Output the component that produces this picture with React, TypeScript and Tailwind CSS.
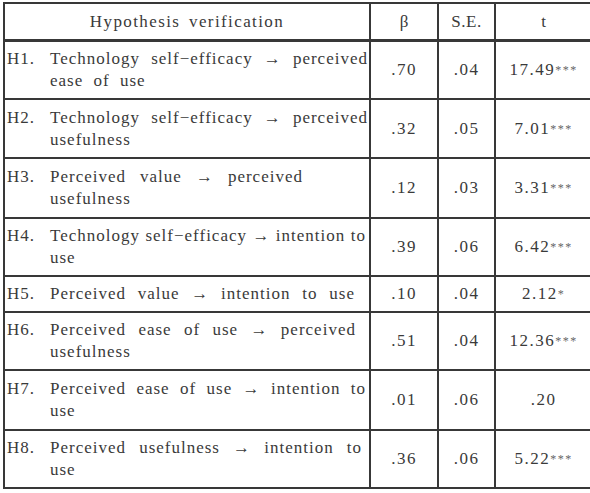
import React from "react";

type Row = { n: string; l1: string; l2?: string; pr: string; b: string; se: string; t: string; stars: string; height: string };

const rows: Row[] = [
  { n: "H1.", l1: "Technology self−efficacy → perceived", l2: "ease of use", pr: "pr-0", b: ".70", se: ".04", t: "17.49", stars: "***", height: "h-[59px]" },
  { n: "H2.", l1: "Technology self−efficacy → perceived", l2: "usefulness", pr: "pr-0", b: ".32", se: ".05", t: "7.01", stars: "***", height: "h-[59px]" },
  { n: "H3.", l1: "Perceived value → perceived", l2: "usefulness", pr: "pr-[65px]", b: ".12", se: ".03", t: "3.31", stars: "***", height: "h-[60px]" },
  { n: "H4.", l1: "Technology self−efficacy → intention to", l2: "use", pr: "pr-[2px]", b: ".39", se: ".06", t: "6.42", stars: "***", height: "h-[58px]" },
  { n: "H5.", l1: "Perceived value → intention to use", pr: "pr-[13px]", b: ".10", se: ".04", t: "2.12", stars: "*", height: "h-[36px]" },
  { n: "H6.", l1: "Perceived ease of use → perceived", l2: "usefulness", pr: "pr-[12px]", b: ".51", se: ".04", t: "12.36", stars: "***", height: "h-[58px]" },
  { n: "H7.", l1: "Perceived ease of use → intention to", l2: "use", pr: "pr-[2px]", b: ".01", se: ".06", t: ".20", stars: "", height: "h-[60px]" },
  { n: "H8.", l1: "Perceived usefulness → intention to", l2: "use", pr: "pr-[6px]", b: ".36", se: ".06", t: "5.22", stars: "***", height: "h-[58px]" },
];

const cell = "border-2 border-[#383838] font-['Liberation_Serif',serif] text-[17px] text-[#3a3a3a]";

export default function App() {
  return (
    <div className="w-[590px] h-[493px] overflow-hidden bg-white pt-[2px] pl-[3px] font-['Liberation_Serif',serif]">
      <table className="border-collapse w-[600px] table-fixed text-[#3a3a3a] text-[17px] font-['Liberation_Serif',serif]">
        <colgroup>
          <col className="w-[366px]" />
          <col className="w-[68px]" />
          <col className="w-[57px]" />
          <col className="w-[109px]" />
        </colgroup>
        <thead>
          <tr className="h-[37px]">
            <th className={`${cell} border-b-[3px] font-normal text-center tracking-[1.4px] [word-spacing:3px]`}>Hypothesis verification</th>
            <th className={`${cell} border-b-[3px] font-normal text-center`}>β</th>
            <th className={`${cell} border-b-[3px] font-normal text-center text-[15px] tracking-[0.5px]`}>S.E.</th>
            <th className={`${cell} border-b-[3px] font-normal text-center pr-[12px]`}>t</th>
          </tr>
        </thead>
        <tbody>
          {rows.map((r) => (
            <tr key={r.n} className={r.height}>
              <td className={`${cell} pl-[2px] pr-[1px] align-middle leading-[22px] tracking-[1px]`}>
                <div className={`flex whitespace-nowrap ${r.pr}`}>
                  <span className="w-[43px] shrink-0">{r.n}</span>
                  <span className="flex flex-1 justify-between">
                    {r.l1.split(" ").map((w, i) => (
                      <span key={i}>{w}</span>
                    ))}
                  </span>
                </div>
                {r.l2 && (
                  <div className="ml-[43px] [word-spacing:5px]">{r.l2}</div>
                )}
              </td>
              <td className={`${cell} text-center align-middle tracking-[1.5px]`}>{r.b}</td>
              <td className={`${cell} text-center align-middle tracking-[1.5px]`}>{r.se}</td>
              <td className={`${cell} text-center align-middle pr-[12px] tracking-[1.5px]`}>
                {r.t}
                {r.stars && <span className="text-[12px] text-[#666] relative top-[-1px] tracking-[1.5px]">{r.stars}</span>}
              </td>
            </tr>
          ))}
        </tbody>
      </table>
    </div>
  );
}
